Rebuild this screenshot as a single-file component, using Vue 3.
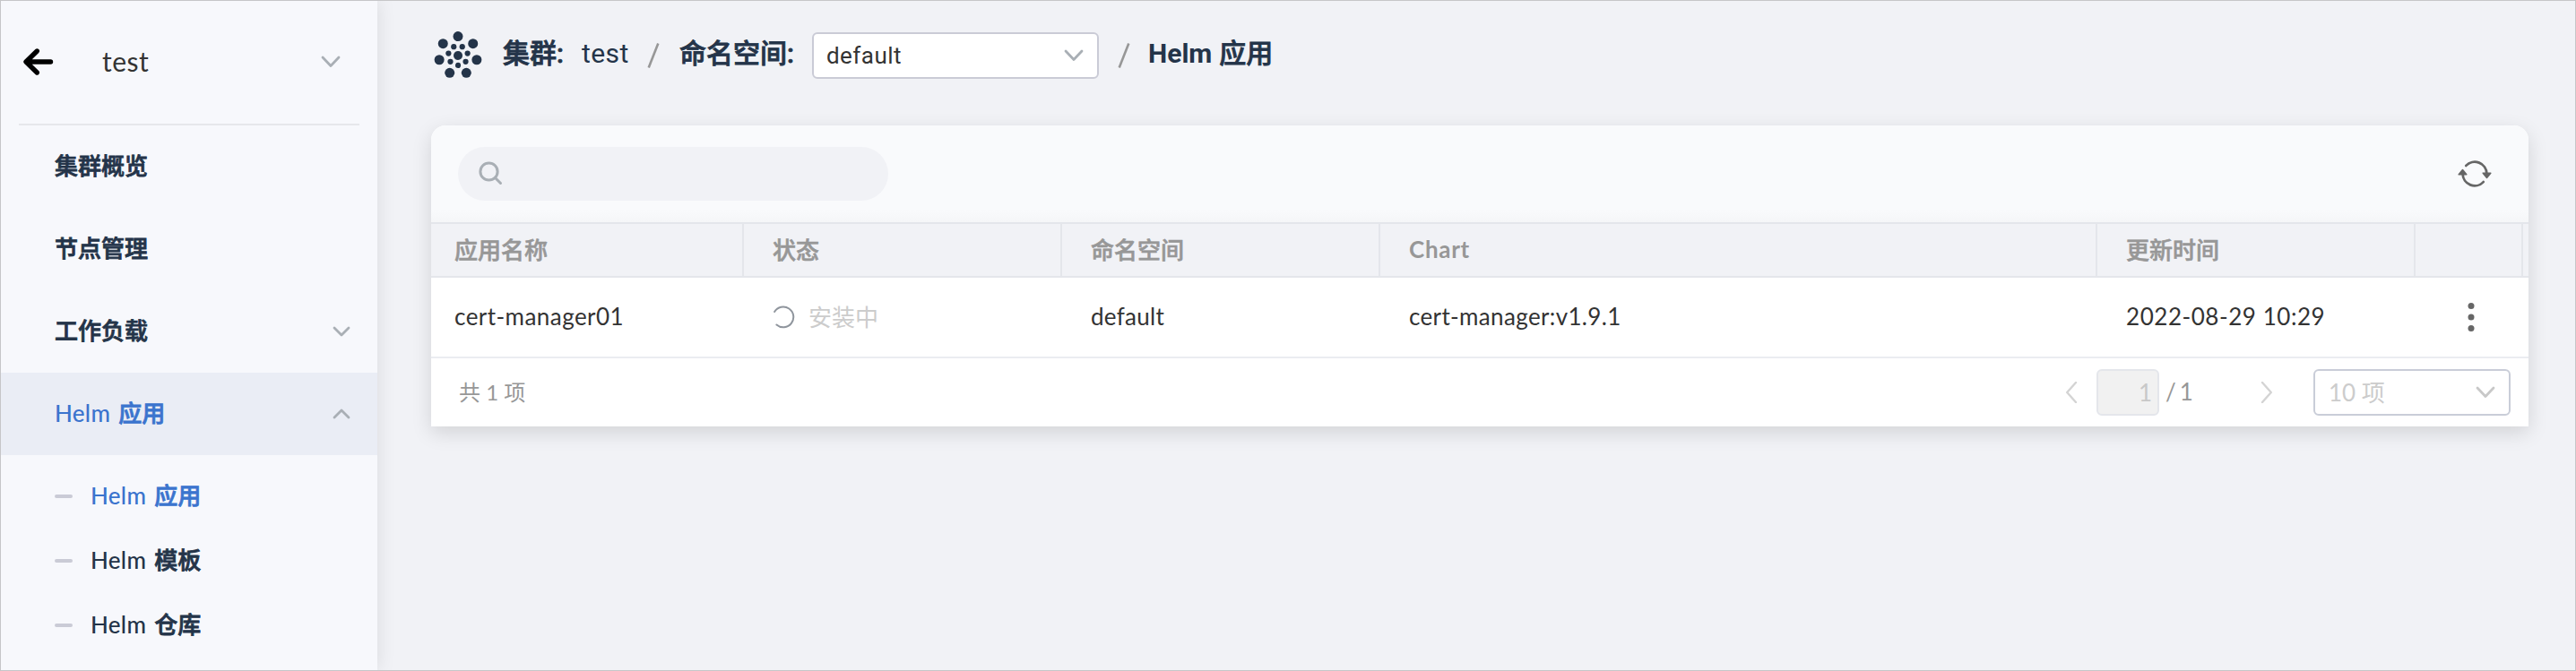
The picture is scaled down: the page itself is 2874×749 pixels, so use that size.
<script setup>
const menu = [
  { name: '集群概览' },
  { name: '节点管理' },
  { name: '工作负载', arrow: 'down' },
  { latin: 'Helm', name: '应用', arrow: 'up', active: true },
]
const submenu = [
  { name: '应用', active: true },
  { name: '模板' },
  { name: '仓库' },
]
const columns = ['应用名称', '状态', '命名空间', 'Chart', '更新时间', '', '']
const outer = Array.from({ length: 7 }, (_, i) => {
  const a = (i * 2 * Math.PI) / 7
  return { x: 27 + 21.4 * Math.sin(a), y: 27 - 21.4 * Math.cos(a) }
})
const inner = Array.from({ length: 7 }, (_, i) => {
  const a = ((i + 0.5) * 2 * Math.PI) / 7
  return { x: 27 + 10.9 * Math.sin(a), y: 27 - 10.9 * Math.cos(a) }
})
</script>

<template>
  <div class="page">
    <aside class="sidebar">
      <div class="cluster">
        <svg class="back" width="36" height="32" viewBox="0 0 36 32">
          <path d="M16.3 4 4 16l12.3 12M4.500 16h27" />
        </svg>
        <span class="cluster-name">test</span>
        <svg class="chev" width="22" height="14" viewBox="0 0 22 14"><path d="M2 2l9 9.500L20 2" /></svg>
      </div>
      <nav>
        <div v-for="m in menu" :key="m.name" class="item" :class="{ active: m.active }">
          <span class="label"><span v-if="m.latin" class="latin">{{ m.latin }}</span>{{ m.name }}</span>
          <svg v-if="m.arrow" class="chev" :class="m.arrow" width="20" height="12" viewBox="0 0 20 12">
            <path d="M2 2l8 8 8-8" />
          </svg>
        </div>
        <div class="sub">
          <div v-for="s in submenu" :key="s.name" class="subitem" :class="{ active: s.active }">
            <i class="dash"></i>
            <span class="label"><span class="latin">Helm</span>{{ s.name }}</span>
          </div>
        </div>
      </nav>
    </aside>

    <main class="main">
      <header class="crumbs">
        <svg class="logo" width="54" height="54" viewBox="0 0 54 54">
          <circle v-for="(d, i) in outer" :key="'o' + i" :cx="d.x" :cy="d.y" r="5.500" />
          <circle v-for="(d, i) in inner" :key="'i' + i" :cx="d.x" :cy="d.y" r="3.100" />
          <circle cx="27" cy="27" r="5" />
        </svg>
        <b class="c-cluster">集群<span class="colon">:</span></b>
        <span class="c-test">test</span>
        <svg class="slash" width="14" height="30" viewBox="0 0 14 30"><path d="M12.300 1.500 1.700 28.500" /></svg>
        <b class="c-ns">命名空间<span class="colon">:</span></b>
        <div class="select ns">
          <span>default</span>
          <svg class="chev" width="22" height="14" viewBox="0 0 22 14"><path d="M2 2l9 9.500L20 2" /></svg>
        </div>
        <svg class="slash s2" width="14" height="30" viewBox="0 0 14 30"><path d="M12.300 1.500 1.700 28.500" /></svg>
        <b class="c-app"><span class="helm">Helm</span>应用</b>
      </header>

      <section class="card">
        <div class="toolbar">
          <div class="search">
            <svg width="30" height="30" viewBox="0 0 30 30">
              <circle cx="12.500" cy="12.500" r="9.600" /><path d="M19.500 19.500l6 6" />
            </svg>
          </div>
          <svg class="refresh" width="38" height="32" viewBox="0 0 38 32">
            <path class="arc" d="M9.300 6.900A13.400 13.400 0 0 1 32.400 16" />
            <path class="arc" d="M28.700 25.100A13.400 13.400 0 0 1 5.600 16" />
            <path class="head" d="M28.200 15.200h8.600l-4.300 5.300z" />
            <path class="head" d="M1.200 16.800h8.600l-4.300-5.300z" />
          </svg>
        </div>
        <div class="row head-row">
          <div v-for="(c, i) in columns" :key="i" class="cell" :class="{ chart: c === 'Chart' }">{{ c }}</div>
        </div>
        <div class="row body-row">
          <div class="cell c1">cert-manager01</div>
          <div class="cell status">
            <svg width="26" height="26" viewBox="0 0 26 26"><path d="M3.100 7A11.400 11.400 0 1 1 5.400 21.500" /></svg>
            <span>安装中</span>
          </div>
          <div class="cell c3">default</div>
          <div class="cell c4">cert-manager:v1.9.1</div>
          <div class="cell c5">2022-08-29 10:29</div>
          <div class="cell more">
            <svg width="8" height="34" viewBox="0 0 8 34">
              <circle cx="4" cy="4.500" r="3.500" /><circle cx="4" cy="17" r="3.500" /><circle cx="4" cy="29.500" r="3.500" />
            </svg>
          </div>
        </div>
        <footer class="foot">
          <span class="total">共 1 项</span>
          <svg class="pg" width="14" height="24" viewBox="0 0 14 24"><path d="M12 1 2.200 12 12 23" /></svg>
          <div class="page-no">1</div>
          <span class="of">/ 1</span>
          <svg class="pg next" width="14" height="24" viewBox="0 0 14 24"><path d="M2 1l9.800 11L2 23" /></svg>
          <div class="select size">
            <span>10 项</span>
            <svg class="chev" width="22" height="14" viewBox="0 0 22 14"><path d="M2 2l9 9.500L20 2" /></svg>
          </div>
        </footer>
      </section>
    </main>
  </div>
</template>

<style scoped>
* { box-sizing: border-box; }
.page {
  display: flex;
  width: 2874px;
  height: 749px;
  overflow: hidden;
  border: 1px solid #c6c6c8;
  background: #f1f2f6;
  font-family: Lato, "Noto Sans CJK SC", sans-serif;
  font-size: 26px;
  color: #333;
  white-space: nowrap;
}
svg { display: block; flex: none; fill: none; stroke-linecap: round; stroke-linejoin: round; }
.chev { stroke: #a9afb5; stroke-width: 2.800; }
.sidebar {
  position: relative;
  flex: none;
  width: 420px;
  background: #f7f8fc;
  box-shadow: 0 0 20px rgba(0, 0, 0, .1);
}
.cluster {
  display: flex;
  align-items: center;
  height: 139px;
  margin: 0 20px;
  padding: 0 21px 2px 4px;
  border-bottom: 2px solid #e6e7eb;
}
.back { stroke: #000; stroke-width: 5.400; }
.cluster-name { flex: 1; margin-left: 53px; padding-bottom: 2px; font-size: 30px; letter-spacing: .5px; }
.item {
  display: flex;
  align-items: center;
  justify-content: space-between;
  height: 92px;
  padding: 0 30px 0 60px;
  color: #243449;
}
.label { padding-bottom: 5px; font-weight: 500; -webkit-text-stroke: .8px currentColor; }
.item.active { background: #eaedf5; }
.active .label { color: #3b74ce; }
.up { transform: rotate(180deg); }
.latin { margin-right: 9px; letter-spacing: .3px; -webkit-text-stroke: 0; }
.sub { padding-top: 10px; }
.subitem { display: flex; align-items: center; height: 72px; padding-left: 60px; color: #243449; }
.dash { width: 20px; height: 4px; margin-right: 20px; border-radius: 2px; background: #cacbd6; }

.main { flex: 1; padding-left: 60px; }
.crumbs { display: flex; align-items: center; height: 121px; padding-left: 3px; font-family: Roboto, "Noto Sans CJK SC", sans-serif; font-size: 30px; line-height: 40px; color: #243449; }
.crumbs b, .c-test { padding-bottom: 3px; }
.crumbs b { font-weight: 500; -webkit-text-stroke: .8px currentColor; }
.logo { fill: #243449; }
.c-cluster { margin-left: 23px; width: 88px; }
.c-test { width: 73px; letter-spacing: .4px; }
.slash { stroke: #979797; stroke-width: 2.600; stroke-linecap: butt; }
.c-ns { margin-left: 22px; width: 148px; }
.select { display: flex; align-items: center; justify-content: space-between; height: 52px; border: 2px solid #cacbd6; border-radius: 6px; background: #fff; }
.ns { width: 320px; padding: 0 15px 0 14px; color: #333; font-size: 26px; letter-spacing: .45px; }
.s2 { margin-left: 21px; }
.c-app { margin-left: 20px; }
.helm { margin-right: 8px; font-weight: 700; -webkit-text-stroke: 0; }

.card { width: 2340px; margin-top: 18px; border-radius: 16px 16px 0 0; background: #fff; box-shadow: 0 7px 22px rgba(0, 0, 0, .13); }
.toolbar { display: flex; align-items: center; justify-content: space-between; height: 108px; padding: 0 41px 0 30px; border-radius: 16px 16px 0 0; background: linear-gradient(#f9fafc 94px, #f5f6f8); }
.search { display: flex; align-items: center; width: 480px; height: 60px; padding-left: 22px; border-radius: 30px; background: #f1f2f6; }
.search svg { stroke: #a9afb5; stroke-width: 3; }
.arc { stroke: #666; stroke-width: 2.800; }
.head { fill: #666; stroke: #666; stroke-width: 1.500; }
.row { display: grid; grid-template-columns: 349px 355px 355px 800px 355px 120px 6px; }
.cell { display: flex; align-items: center; padding-left: 32px; }
.cell:first-child { padding-left: 26px; }
.head-row { height: 62px; border: solid #e4e6eb; border-width: 2px 0; background: #f1f2f6; color: #979797; font-weight: 500; -webkit-text-stroke: .6px currentColor; }
.head-row .cell { padding-bottom: 4px; border-right: 2px solid #e4e6eb; }
.head-row .cell:last-child { border: 0; padding: 0; }
.head-row .chart { padding-bottom: 2px; font-weight: 700; letter-spacing: .7px; -webkit-text-stroke: 0; }
.body-row { height: 90px; border-bottom: 2px solid #ebecf1; }
.c1 { padding-bottom: 2px; letter-spacing: .45px; }
.c3 { padding-bottom: 2px; letter-spacing: .3px; }
.c4 { padding-bottom: 2px; letter-spacing: .35px; }
.c5 { padding-bottom: 2px; letter-spacing: .55px; }
.status { color: #ccc; }
.status span { padding-bottom: 4px; }
.status svg { margin-right: 15px; margin-left: -1px; stroke: #8f959d; stroke-width: 2; }
.cell.more { padding-left: 58px; }
.more svg { fill: #666; }
.foot { display: flex; align-items: center; height: 76px; padding: 0 20px 0 31px; color: #979797; }
.total { flex: 1; padding-bottom: 4px; font-size: 24px; }
.pg { stroke: #d4d4d4; stroke-width: 2.400; }
.page-no { width: 70px; height: 52px; margin: 0 7px 0 21px; padding-right: 6px; border: 2px solid #e4e6eb; border-radius: 6px; background: #f1f1f1; color: #c8c8c8; text-align: right; line-height: 48px; }
.of { width: 106px; padding-bottom: 2px; letter-spacing: -1.3px; }
.size { width: 220px; margin-left: 45px; padding: 0 15px; color: #ccc; border-color: #c9cdd8; }
.size span { padding-bottom: 4px; }
.size .chev { stroke: #c8c8c8; }
</style>

<style>
body { background: #f1f2f6; }
</style>
